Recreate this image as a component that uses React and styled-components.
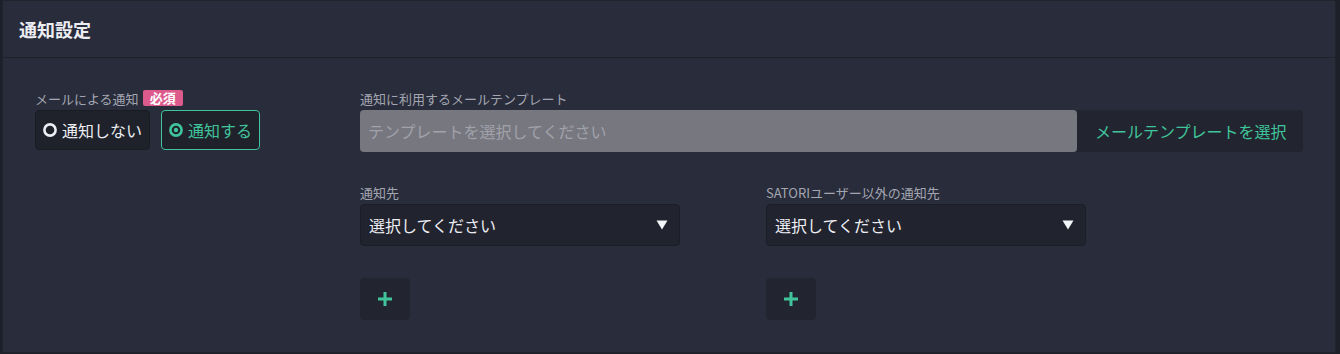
import React from 'react'
import styled, { createGlobalStyle } from 'styled-components'

const GREEN = '#3fc49b'

const GlobalStyle = createGlobalStyle`
  body {
    margin: 0;
    background: #1e2029;
    font-family: 'Noto Sans CJK JP', 'Noto Sans', sans-serif;
    color: #e6e7ec;
  }
`

const Card = styled.section`
  box-sizing: border-box;
  margin: 0 4px 0 2px;
  height: 353px;
  background: #292c3b;
  border: 1px solid #20222c;
`

const Header = styled.header`
  height: 56px;
  display: flex;
  align-items: center;
  padding-left: 16px;
  border-bottom: 1px solid #1f212b;
`

const Title = styled.h2`
  margin: 0;
  font-size: 18px;
  font-weight: 700;
  color: #ecedf2;
`

const Body = styled.div`
  display: grid;
  grid-template-columns: 325px 1fr;
  padding: 31px 32px 0 32px;
`

const Label = styled.div`
  display: flex;
  align-items: center;
  gap: 4px;
  height: 18px;
  margin-bottom: 3px;
  font-size: 13px;
  color: #a3a6b1;
  white-space: nowrap;
`

const Badge = styled.span`
  display: inline-block;
  height: 16px;
  line-height: 16px;
  padding: 0 7px;
  border-radius: 2px;
  background: #dc5a8c;
  color: #fff;
  font-size: 13px;
  font-weight: 700;
`

const RadioRow = styled.div`
  display: flex;
  gap: 11px;
`

const RadioButton = styled.button`
  box-sizing: border-box;
  display: flex;
  align-items: center;
  gap: 5px;
  height: 40px;
  padding: 0 7px;
  border-radius: 4px;
  font: inherit;
  font-size: 16px;
  cursor: pointer;
  background: #1f212b;
  border: 1px solid ${p => (p.$checked ? GREEN : '#1a1c24')};
  color: ${p => (p.$checked ? GREEN : '#eceef3')};
`

const Field = styled.div`
  margin-bottom: 31px;
`

const TemplateRow = styled.div`
  display: flex;
  height: 42px;
`

const TemplateInput = styled.div`
  flex: 1;
  display: flex;
  align-items: center;
  padding-left: 8px;
  background: #76777f;
  border-radius: 4px;
  color: #a1a2aa;
  font-size: 16px;
`

const PickButton = styled.button`
  width: 226px;
  border: none;
  border-radius: 0 4px 4px 0;
  background: #22252f;
  color: ${GREEN};
  font: inherit;
  font-size: 16px;
  text-align: left;
  padding-left: 18px;
`

const Columns = styled.div`
  display: grid;
  grid-template-columns: 406px 406px;
`

const Select = styled.div`
  box-sizing: border-box;
  width: 320px;
  height: 42px;
  display: flex;
  align-items: center;
  justify-content: space-between;
  padding: 0 11px 0 8px;
  background: #21232e;
  border: 1px solid #1b1d27;
  border-radius: 4px;
  font-size: 16px;
  color: #eceef3;
`

const AddButton = styled.button`
  width: 50px;
  height: 42px;
  margin-top: 32px;
  border: none;
  border-radius: 4px;
  background: #22252f;
  display: flex;
  align-items: center;
  justify-content: center;
`

const Ring = ({ checked }) => (
  <svg width='14' height='14' viewBox='0 0 14 14'>
    <circle cx='7' cy='7' r='5.6' fill='none' stroke='currentColor' strokeWidth='2.6' />
    {checked && <circle cx='7' cy='7' r='2.2' fill='currentColor' />}
  </svg>
)

const Caret = () => (
  <svg width='12' height='10' viewBox='0 0 12 10'>
    <path d='M0.5 0.5 H11.5 L6 9.5 Z' fill='#f4f5f8' />
  </svg>
)

const Plus = () => (
  <svg width='14' height='14' viewBox='0 0 14 14'>
    <path d='M5.5 0 H8.5 V5.5 H14 V8.5 H8.5 V14 H5.5 V8.5 H0 V5.5 H5.5 Z' fill={GREEN} />
  </svg>
)

const Target = ({ label }) => (
  <div>
    <Label>{label}</Label>
    <Select>
      選択してください
      <Caret />
    </Select>
    <AddButton><Plus /></AddButton>
  </div>
)

export default function App () {
  return (
    <>
      <GlobalStyle />
      <Card>
        <Header>
          <Title>通知設定</Title>
        </Header>
        <Body>
          <div>
            <Label>
              メールによる通知<Badge>必須</Badge>
            </Label>
            <RadioRow>
              <RadioButton><Ring />通知しない</RadioButton>
              <RadioButton $checked><Ring checked />通知する</RadioButton>
            </RadioRow>
          </div>
          <div>
            <Field>
              <Label>通知に利用するメールテンプレート</Label>
              <TemplateRow>
                <TemplateInput>テンプレートを選択してください</TemplateInput>
                <PickButton>メールテンプレートを選択</PickButton>
              </TemplateRow>
            </Field>
            <Columns>
              <Target label='通知先' />
              <Target label='SATORIユーザー以外の通知先' />
            </Columns>
          </div>
        </Body>
      </Card>
    </>
  )
}
